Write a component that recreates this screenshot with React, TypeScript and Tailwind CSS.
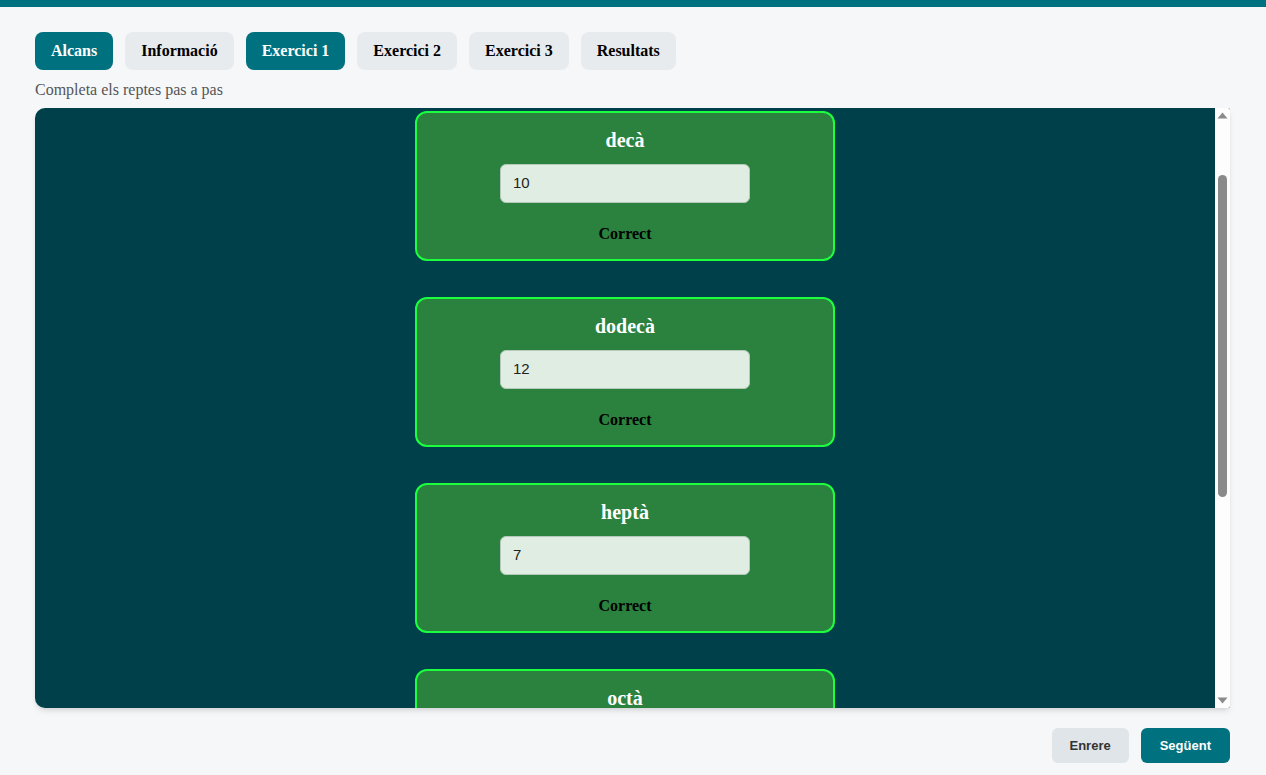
import React from "react";

const tabs = [
  { label: "Alcans", active: true },
  { label: "Informació", active: false },
  { label: "Exercici 1", active: true },
  { label: "Exercici 2", active: false },
  { label: "Exercici 3", active: false },
  { label: "Resultats", active: false },
];

const items = [
  { name: "decà", value: "10" },
  { name: "dodecà", value: "12" },
  { name: "heptà", value: "7" },
  { name: "octà", value: "8" },
];

const serif = { fontFamily: '"Liberation Serif", "Times New Roman", serif' };
const sans = { fontFamily: '"Liberation Sans", Arial, sans-serif' };

export default function App() {
  return (
    <div className="min-h-[775px] w-full bg-[#f5f7f9]" style={serif}>
      <div className="h-[7px] w-full bg-[#00717f]" />
      <div className="pl-[35px] pr-[36px]">
        <div className="mt-[25px] flex gap-3">
          {tabs.map((t) => (
            <div
              key={t.label}
              className={`flex h-[38px] items-center rounded-lg px-4 text-[16px] font-bold ${
                t.active ? "bg-[#00717f] text-white" : "bg-[#e8ebee] text-black"
              }`}
            >
              {t.label}
            </div>
          ))}
        </div>
        <div className="mt-2 text-[16px] leading-[24px] text-[#555]">Completa els reptes pas a pas</div>
        <div className="mt-[6px] flex h-[600px] overflow-hidden rounded-l-[10px] rounded-r-[2px] bg-[#00404a] shadow-md">
          <div className="flex-1 overflow-hidden">
            <div className="flex flex-col items-center gap-9 pt-[3px]">
              {items.map((it) => (
                <div
                  key={it.name}
                  className="flex h-[150px] w-[420px] shrink-0 flex-col items-center rounded-xl border-2 border-[#1cff3e] bg-[#2a823e] pt-[15px]"
                >
                  <div className="text-[20px] font-bold leading-[24px] text-white">{it.name}</div>
                  <div
                    className="mt-3 flex h-[39px] w-[250px] items-center rounded-md border border-[#b5c9ba] bg-[#e0ede3] px-3 text-[15px] text-[#222]"
                    style={sans}
                  >
                    {it.value}
                  </div>
                  <div className="mt-[21px] text-[16px] font-bold leading-[20px] text-black">Correct</div>
                </div>
              ))}
            </div>
          </div>
          <div className="flex w-[15px] shrink-0 flex-col items-center bg-[#fdfdfd]">
            <svg width="15" height="15" viewBox="0 0 15 15" className="shrink-0">
              <polygon points="2.5,10.5 12.5,10.5 7.5,4.5" fill="#8a8a8a" />
            </svg>
            <div className="h-[52px]" />
            <div className="h-[322px] w-[9px] rounded-full bg-[#8a8a8a]" />
            <div className="flex-1" />
            <svg width="15" height="15" viewBox="0 0 15 15" className="shrink-0">
              <polygon points="2.5,4.5 12.5,4.5 7.5,10.5" fill="#8a8a8a" />
            </svg>
          </div>
        </div>
        <div className="mt-5 flex justify-end gap-3" style={sans}>
          <div className="flex h-[35px] items-center rounded-md bg-[#dfe5e9] px-[18px] text-[13px] font-bold text-[#333]">
            Enrere
          </div>
          <div className="flex h-[35px] items-center rounded-md bg-[#00717f] px-[19px] text-[13px] font-bold text-white">
            Següent
          </div>
        </div>
      </div>
    </div>
  );
}
